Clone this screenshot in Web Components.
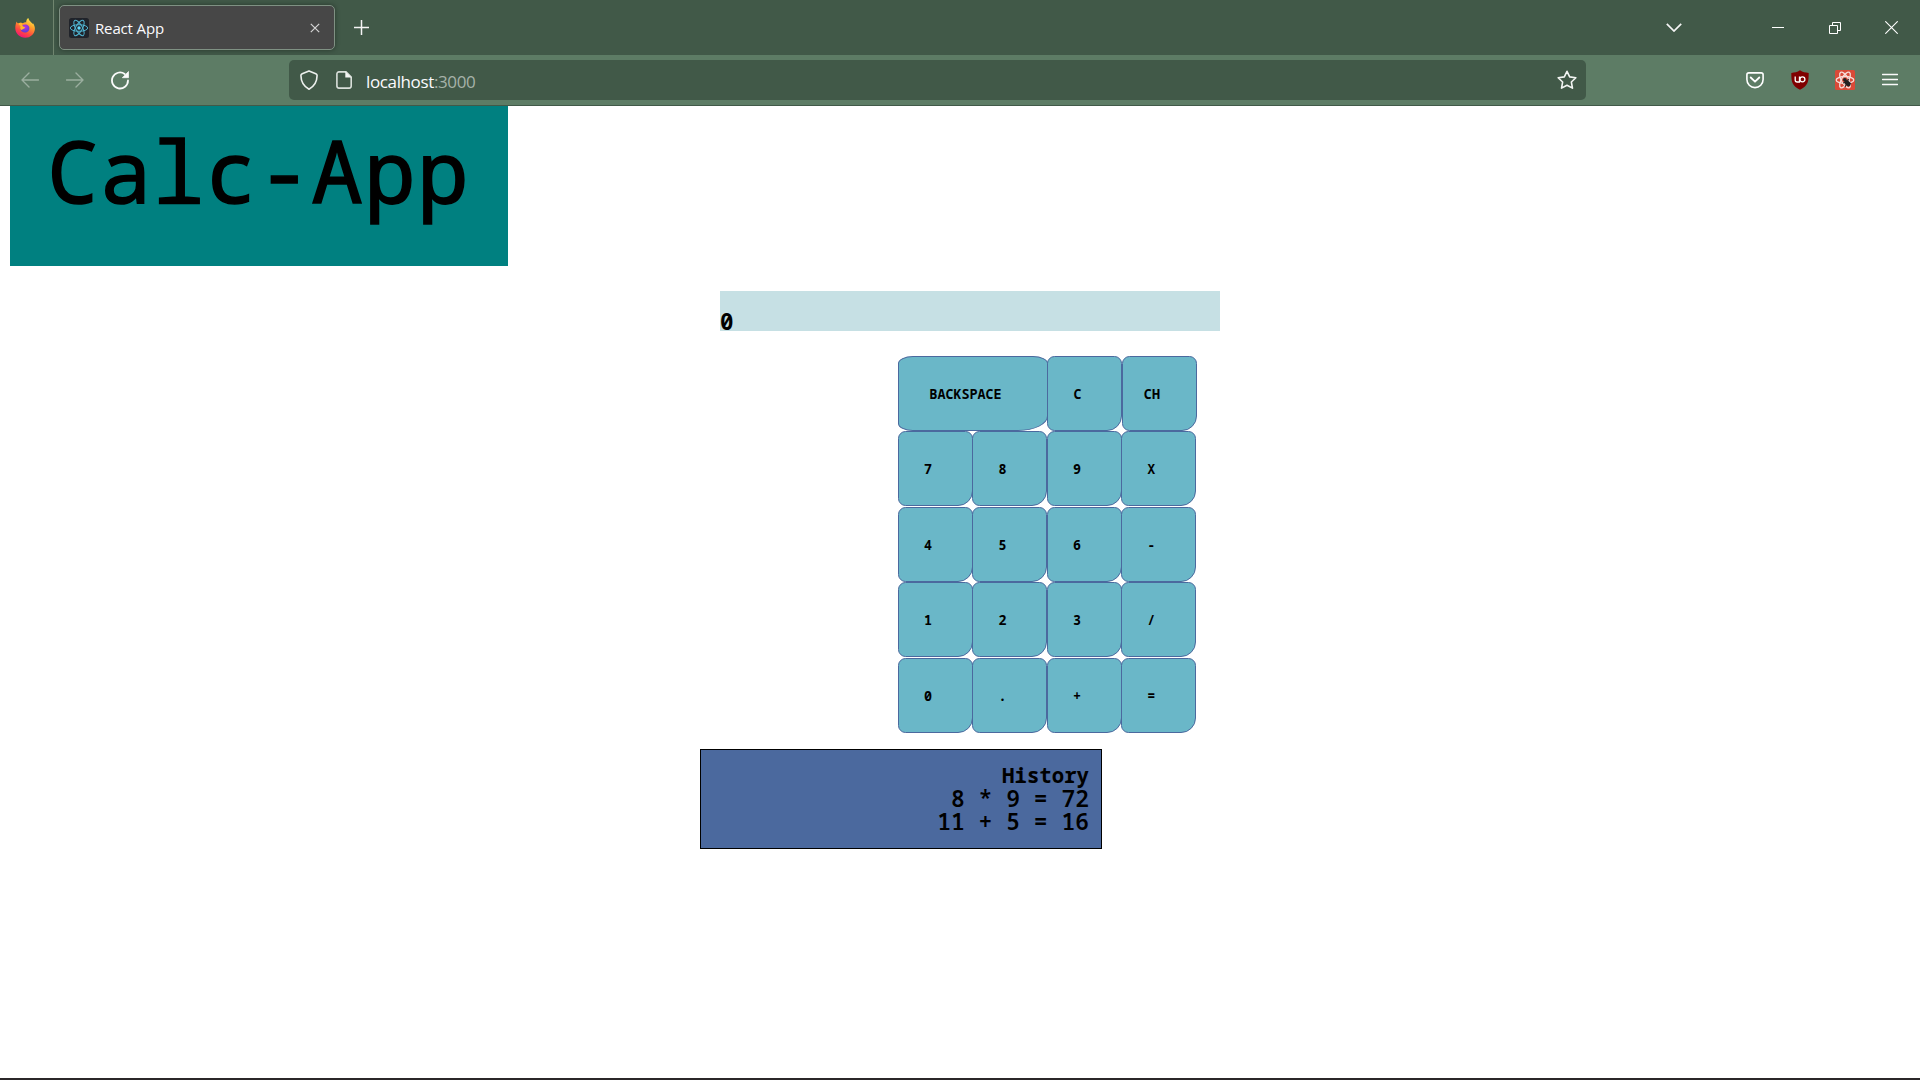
<!DOCTYPE html>
<html lang="en">
<head>
<meta charset="utf-8">
<title>React App</title>
<style>
html,body{margin:0;height:100%;overflow:hidden;background:#fff}
</style>
</head>
<body>
<browser-window>
  <browser-tabs slot="chrome">React App</browser-tabs>
  <browser-toolbar slot="chrome"></browser-toolbar>
  <calc-app></calc-app>
</browser-window>
<script>
const define = (name, html) => customElements.define(name, class extends HTMLElement {
  constructor() {
    super();
    this.attachShadow({ mode: 'open' }).innerHTML = typeof html === 'function' ? html(this) : html;
  }
});

const star = Array.from({ length: 10 }, (_, i) => {
  const a = -Math.PI / 2 + i * Math.PI / 5, r = i % 2 ? 4.6 : 9.3;
  return (10 + r * Math.cos(a)).toFixed(2) + ',' + (10.6 + r * Math.sin(a)).toFixed(2);
}).join(' ');

const ICONS = {
  firefox: [20, 20, `<defs><linearGradient id="a" x1=".8" y1="0" x2=".3" y2="1"><stop offset="0" stop-color="#fff44f"/><stop offset=".35" stop-color="#ffa32c"/><stop offset=".7" stop-color="#ff4a3f"/><stop offset="1" stop-color="#f0107c"/></linearGradient><radialGradient id="b" cx=".5" cy=".3" r=".7"><stop offset="0" stop-color="#b833e1"/><stop offset="1" stop-color="#5b3cd6"/></radialGradient></defs>
    <path fill="url(#a)" d="M1.6 3.6C2 4.6 2.4 5 3.2 5.4 4.6 4.6 6.3 4.6 7.7 5.2 9 4.6 10.2 4.2 11.2 4.4 11.1 2.6 11.9.9 13.3.1 13.7 2 15 3.2 16 4.3 16.9 5 17.2 5.3 17.4 5.9L18 5.2C19.2 6.8 20 8.8 19.9 11 19.6 16 15.4 19.8 10.2 19.8 4.7 19.8.4 15.5.3 10.3 .2 7.8.8 5.7 1.6 3.6Z"/>
    <path fill="url(#b)" d="M7.200 7.500C9 5.800 12.800 6 14 8.400 15.200 11.200 13.300 14.600 10 14.600 7.600 14.600 5.700 13 5.700 11 7.200 11.200 9.600 10.900 10 9.500 9.400 9.200 8 9.100 7.200 7.500Z"/>
    <path fill="#ffb52e" d="M3.200 5.400C4.600 4.600 6.300 4.600 7.300 5.500 6.800 6.500 7 7.600 8 8.400 9 9 10 8.800 10 9.500 9.500 10.800 7.600 11 6.400 12.100 5.300 11 5 9.500 5.600 7.900 4.600 7.300 3.700 6.500 3.200 5.400Z"/>`],
  react: [20, 20, `<rect width="20" height="20" rx="2.500" fill="#20232a"/><g fill="none" stroke="#4fb3d0" stroke-width="1"><ellipse cx="10" cy="10" rx="8.700" ry="3.300"/><ellipse cx="10" cy="10" rx="8.700" ry="3.300" transform="rotate(60 10 10)"/><ellipse cx="10" cy="10" rx="8.700" ry="3.300" transform="rotate(120 10 10)"/></g><circle cx="10" cy="10" r="1.700" fill="#61dafb"/>`],
  x: [10, 10, `<path d="M.8.8l8.400 8.400M9.200.8L.8 9.200" stroke="#d5d5d5" stroke-width="1.200"/>`],
  plus: [15, 15, `<path d="M7.500 0v15M0 7.500h15" stroke="#f4f4f4" stroke-width="1.500"/>`],
  back: [18, 16, `<path d="M17.500 8H1M8 1L1 8l7 7" fill="none" stroke="#9bae9f" stroke-width="1.400" stroke-linecap="round" stroke-linejoin="round"/>`],
  forward: [18, 16, `<path d="M.5 8H17M10 1l7 7-7 7" fill="none" stroke="#9bae9f" stroke-width="1.400" stroke-linecap="round" stroke-linejoin="round"/>`],
  reload: [20, 20, `<path d="M14.700 4A8 8 0 1 0 18 10.500" fill="none" stroke="#fbfbfb" stroke-width="1.800" stroke-linecap="round"/><path d="M18.500 1.500v6.200h-6.200z" fill="#fbfbfb" stroke="#fbfbfb" stroke-width=".7" stroke-linejoin="round"/>`],
  shield: [20, 20, `<path d="M10 .9L16.800 3.700c.9.400 1.300 1 1.300 1.900-.1 6.300-2.700 10.800-8.100 13.600C4.600 16.400 2 11.900 1.900 5.600c0-.9.400-1.500 1.300-1.900z" fill="none" stroke="#ecf0ed" stroke-width="1.600" stroke-linejoin="round"/>`],
  page: [16, 18, `<path d="M3 .9h7l5.200 5.200v9c0 1.300-.8 2-2 2H3c-1.300 0-2.100-.8-2.100-2V3C.9 1.700 1.700.9 3 .9z" fill="none" stroke="#d9dfda" stroke-width="1.600"/><path d="M9.300.4l6.200 6.200H9.300z" fill="#f3f5f3"/>`],
  star: [20, 20, `<polygon points="${star}" fill="none" stroke="#f2f5f3" stroke-width="1.600" stroke-linejoin="round"/>`],
  chevron: [16, 9, `<path d="M.8.8L8 8 15.200.8" fill="none" stroke="#f5f5f5" stroke-width="1.700"/>`],
  min: [12, 12, `<path d="M0 5.500h12" stroke="#fff"/>`],
  restore: [12, 12, `<path d="M.5 3.500h8v8h-8zM3.500 3.500v-3h8v8h-3" fill="none" stroke="#fff"/>`],
  close: [13, 13, `<path d="M.3.300l12.400 12.400M12.700.300L.3 12.700" stroke="#fff" stroke-width="1.100"/>`],
  pocket: [18, 17, `<path d="M2.800.9h12.400c1.200 0 1.900.7 1.900 1.900v4.700a8.100 8.100 0 0 1-16.200 0V2.800C.9 1.600 1.600.9 2.800.9z" fill="none" stroke="#fff" stroke-width="1.600"/><path d="M4.700 5.500L9 9.700l4.300-4.200" fill="none" stroke="#fff" stroke-width="1.800" stroke-linecap="round" stroke-linejoin="round"/>`],
  ublock: [18, 20, `<path d="M9 .3c2.700 1.800 5.400 2.400 8.700 2.600 0 9.500-.8 12.500-8.700 16.800C1.100 15.400.3 12.400.3 2.900 3.600 2.700 6.300 2.100 9 .3z" fill="#800000"/><path d="M4.200 6.500v3.500c0 1.300.7 2 2 2h2.300V6.500" fill="none" stroke="#fff" stroke-width="1.300"/><circle cx="11.400" cy="9.300" r="2.500" fill="none" stroke="#fff" stroke-width="1.300"/>`],
  devtools: [20, 20, `<rect width="20" height="20" rx="1.500" fill="#d94a38"/><g fill="none" stroke="#f7dcd8" stroke-width="1.300"><ellipse cx="10" cy="10" rx="8.800" ry="3.500"/><ellipse cx="10" cy="10" rx="8.800" ry="3.500" transform="rotate(60 10 10)"/><ellipse cx="10" cy="10" rx="8.800" ry="3.500" transform="rotate(120 10 10)"/></g><g stroke="#222" fill="#222"><circle cx="9.800" cy="9.800" r="1.800" stroke="none"/><ellipse cx="12.500" cy="13.200" rx="2.300" ry="3.600" stroke="none" transform="rotate(-45 12.500 13.200)"/><path d="M8 13l4-1 4 1.500M10 17l1.500-3 2-5" fill="none" stroke-width="1.100"/></g>`],
  menu: [16, 14, `<path d="M.5 1.500h15M.5 6.500h15M.5 11.500h15" stroke="#fafafa" stroke-width="1.400" stroke-linecap="round"/>`]
};

define('ui-icon', el => {
  const [w, h, art] = ICONS[el.getAttribute('name')];
  return `<style>:host{display:block;flex:none;width:${w}px;height:${h}px}svg{display:block}</style>
    <svg width="${w}" height="${h}" viewBox="0 0 ${w} ${h}">${art}</svg>`;
});

define('browser-window', `<style>
  :host{display:flex;flex-direction:column;width:1920px;height:1080px;box-sizing:border-box;background:#fff;border-bottom:2px solid #2b2729}
  main{flex:1;min-height:0}
</style><slot name="chrome"></slot><main><slot></slot></main>`);

define('browser-tabs', `<style>
  :host{display:flex;align-items:center;height:55px;background:#415948;font:15px "Open Sans",sans-serif;color:#fbfbfe}
  .pin{display:flex;align-items:center;box-sizing:border-box;height:55px;width:54px;padding-left:15px;border-right:1px solid #70856f}
  .tab{display:flex;align-items:center;box-sizing:border-box;width:276px;height:45px;margin-left:5px;padding:0 14px 0 9px;background:#474747;border:1px solid #7f9183;border-radius:5px;box-shadow:0 0 5px rgba(0,0,0,.4)}
  .label{flex:1;margin-left:6px;letter-spacing:-.15px;line-height:20px;padding-top:1px}
  .new{margin-left:19px}
  .win{display:flex;align-items:center;margin-left:auto}
</style>
<div class="pin"><ui-icon name="firefox"></ui-icon></div>
<div class="tab"><ui-icon name="react"></ui-icon><span class="label"><slot></slot></span><ui-icon name="x"></ui-icon></div>
<ui-icon class="new" name="plus"></ui-icon>
<div class="win"><ui-icon name="chevron" style="margin-right:90px"></ui-icon><ui-icon name="min" style="margin-right:45px"></ui-icon><ui-icon name="restore" style="margin-right:44px"></ui-icon><ui-icon name="close" style="margin-right:22px"></ui-icon></div>`);

define('browser-toolbar', `<style>
  :host{display:flex;align-items:center;height:50px;background:#5d7c65;border-bottom:1px solid #415948;font:17px "Open Sans",sans-serif;color:#fbfbfe}
  nav{display:flex;align-items:center;width:289px;box-sizing:border-box;padding-left:21px;gap:27px}
  .url{display:flex;align-items:center;box-sizing:border-box;width:1297px;height:40px;padding:0 9px 0 10px;background:#415948;border-radius:5px}
  .addr{flex:1;margin-left:14px;letter-spacing:-.37px;line-height:22px;padding-top:3px}
  i{font-style:normal;color:#a6b2a9}
  .ext{display:flex;align-items:center;margin-left:auto;padding-right:22px;gap:27px}
</style>
<nav><ui-icon name="back"></ui-icon><ui-icon name="forward"></ui-icon><ui-icon name="reload" style="margin-left:-1px"></ui-icon></nav>
<div class="url"><ui-icon name="shield"></ui-icon><ui-icon name="page" style="margin-left:17px"></ui-icon><span class="addr">localhost<i>:3000</i></span><ui-icon name="star"></ui-icon></div>
<div class="ext"><ui-icon name="pocket"></ui-icon><ui-icon name="ublock"></ui-icon><ui-icon name="devtools" style="margin-left:-1px"></ui-icon><ui-icon name="menu"></ui-icon></div>`);

define('calc-title', `<style>
  :host{display:block;width:498px;height:160px;margin-left:10px;box-sizing:border-box;padding:8px 0 0 37px;background:#008080;color:#000;font:86px/112px "Noto Sans Mono","DejaVu Sans Mono",monospace;letter-spacing:1.250px;-webkit-text-stroke:1.500px #000;white-space:nowrap}
</style><slot></slot>`);

define('calc-display', `<style>
  :host{display:flex;align-items:flex-end;width:500px;height:40px;margin:25px 0 0 720px;background:#c6e0e4;font:bold 22.500px/18px "Noto Sans Mono","DejaVu Sans Mono",monospace;color:#000}
</style><slot></slot>`);

define('calc-key', `<style>
  :host{display:flex;align-items:center;justify-content:center;flex:none;box-sizing:border-box;width:75px;height:75px;padding:1px 15px 0 0;margin-right:-.55px;background:#6ab7c8;border:1px solid #4b699e;border-radius:10% 10% 20% 10%;font:bold 13.400px/18px "Noto Sans Mono","DejaVu Sans Mono",monospace;color:#000}
  :host([wide]){width:150px}
</style><slot></slot>`);

define('calc-row', `<style>:host{display:flex;height:75.400px}</style><slot></slot>`);
define('calc-pad', `<style>:host{display:block;margin:25px 0 0 898px}</style><slot></slot>`);

define('calc-history', `<style>
  :host{display:block;box-sizing:border-box;width:402px;height:100px;margin:16px 0 0 700px;padding:14px 12px 0 0;border:1px solid #000;background:#4b699e;color:#000;text-align:right;font:600 23px/23.300px "Noto Sans Mono","DejaVu Sans Mono",monospace}
  h2{margin:0;font-size:20.700px;font-weight:bold;line-height:23px}
  ::slotted(div){white-space:pre}
</style><h2>History</h2><slot></slot>`);

const rows = [['BACKSPACE', 'C', 'CH'], ['7', '8', '9', 'X'], ['4', '5', '6', '-'], ['1', '2', '3', '/'], ['0', '.', '+', '=']];
define('calc-app', `<style>:host{display:block}</style>
<calc-title>Calc-App</calc-title>
<calc-display>0</calc-display>
<calc-pad>${rows.map(r => `<calc-row>${r.map(k => `<calc-key${k.length > 2 ? ' wide' : ''}>${k}</calc-key>`).join('')}</calc-row>`).join('')}</calc-pad>
<calc-history><div>8 * 9 = 72</div><div>11 + 5 = 16</div></calc-history>`);
</script>
</body>
</html>
